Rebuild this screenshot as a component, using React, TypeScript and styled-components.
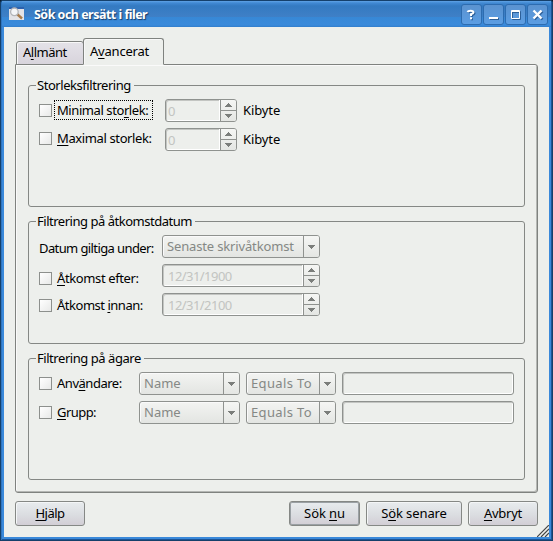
import React from "react";
import styled, { createGlobalStyle } from "styled-components";

const Global = createGlobalStyle`
  * { box-sizing: border-box; }
  html, body { margin: 0; padding: 0; overflow: hidden; }
  body { background: #0c1c30; font-family: "Noto Sans", "Open Sans", sans-serif; font-size: 13px; line-height: 18px; color: #000; }
`;

const Frame = styled.div`
  width: 553px;
  height: 541px;
  display: flex;
  flex-direction: column;
  background: #3a89da;
  border: 1px solid #15406b;
  border-radius: 3px 3px 0 0;
  padding: 0 3px 3px;
  box-shadow: inset 1px 0 #2f75bf, inset -1px -1px #1d5496;
`;

const TitleBar = styled.div`
  height: 26px;
  margin: 0 -2px;
  padding: 3px 3px 0 6px;
  display: flex;
  background: linear-gradient(#60a3e6 0, #4189d3 2px, #347ac1 5px, #3f80c7 16px, #3788d6 16px, #3a8adb 24px, #327dcb 26px);
`;

const Title = styled.div<{ $track: number }>`
  flex: 1;
  margin: 2px 0 0 9px;
  font-weight: 700;
  font-size: 12.5px;
  color: #fff;
  letter-spacing: ${(p) => p.$track}px;
  text-shadow: 1px 1px 1px #173c68;
  white-space: pre;
`;

const TitleButtons = styled.div`
  display: flex;
  gap: 1px;
`;

const TitleButton = styled.div`
  width: 21px;
  height: 21px;
  border: 1px solid #2d6cb0;
  border-radius: 3px;
  background: linear-gradient(#5b93d0, #5b9de3);
  svg { display: block; }
`;

const Content = styled.div`
  flex: 1;
  display: flex;
  flex-direction: column;
  background: #edefec;
  padding: 11px 11px 0;
  position: relative;
`;

const Tabs = styled.div`
  display: flex;
  align-items: flex-end;
  height: 27px;
  margin-bottom: -1px;
  position: relative;
`;

const Tab = styled.div<{ $active?: boolean }>`
  width: ${(p) => (p.$active ? 81 : 68)}px;
  height: ${(p) => (p.$active ? 27 : 24)}px;
  margin-left: ${(p) => (p.$active ? -1 : 1)}px;
  padding: ${(p) => (p.$active ? "3px 0 0 6px" : "1px 0 0 6px")};
  border: 1px solid #7f827f;
  border-bottom-color: ${(p) => (p.$active ? "#edefec" : "#7f827f")};
  border-radius: 3px 3px 0 0;
  background: ${(p) => (p.$active ? "#edefec" : "linear-gradient(#e4e2e8, #d8d4dc)")};
  box-shadow: inset 1px 1px #f8f8f8;
  z-index: ${(p) => (p.$active ? 1 : 0)};
`;

const Panel = styled.div`
  width: 523px;
  height: 429px;
  border: 1px solid #7f827f;
  border-radius: 0 3px 3px 3px;
  box-shadow: inset 1px 1px #fafafa, inset -1px -1px #b5b7b4;
  padding: 20px 12px 0;
`;

const Group = styled.div<{ $height: number }>`
  height: ${(p) => p.$height}px;
  width: 497px;
  border: 1px solid #858885;
  border-radius: 3px;
  margin-bottom: 14px;
`;

const Legend = styled.div`
  width: fit-content;
  height: 19px;
  margin: -10px 0 0 7px;
  padding: 0 3px 0 1px;
  background: #edefec;
`;

const Row = styled.div<{ $gap: number }>`
  display: flex;
  align-items: flex-start;
  height: 23px;
  margin-top: ${(p) => p.$gap}px;
  padding-left: 10px;
`;

const CheckCell = styled.div<{ $width: number; $top: number }>`
  width: ${(p) => p.$width}px;
  padding-top: ${(p) => p.$top}px;
  display: flex;
  align-items: flex-start;
  flex: none;
`;

const Box = styled.div`
  width: 13px;
  height: 13px;
  flex: none;
  border: 1px solid #8d908d;
  background: linear-gradient(135deg, #fff, #e8e9e8);
`;

const CheckLabel = styled.div<{ $focus?: boolean }>`
  width: ${(p) => (p.$focus ? "99px" : "auto")};
  height: 20px;
  margin: -4px 0 0 2px;
  padding: 0 0 0 2px;
  border: 1px dotted ${(p) => (p.$focus ? "#000" : "transparent")};
`;

const Text = styled.span<{ $track?: number }>`
  white-space: pre;
  letter-spacing: ${(p) => p.$track ?? 0}px;
  u { text-decoration: underline; text-underline-offset: 2px; text-decoration-thickness: 1px; text-decoration-skip-ink: none; }
`;

const Field = styled.div<{ $width: number; $kind: "combo" | "spin" | "text" }>`
  width: ${(p) => p.$width}px;
  height: 23px;
  flex: none;
  display: flex;
  border: 1px solid #8f928f;
  border-radius: 3px;
  overflow: hidden;
  color: ${(p) => (p.$kind === "combo" ? "#858885" : "#c2c4c1")};
  background: ${(p) => (p.$kind === "combo" ? "linear-gradient(#f3f4f2, #e3e5e2)" : "#edefec")};
  box-shadow: ${(p) => (p.$kind === "combo" ? "inset 1px 1px #fafafa" : "inset 1px 1px #c3c5c2, inset -1px -1px #fff")};
`;

const Value = styled.div<{ $combo?: boolean; $left?: number }>`
  flex: 1;
  padding: ${(p) => (p.$combo ? 1 : 2)}px 0 0 ${(p) => p.$left ?? 4}px;
  border-right: ${(p) => (p.$combo ? "0" : "1px solid #fff")};
`;

const Arrows = styled.div`
  width: 16px;
  border-left: 1px solid #8f928f;
  background: linear-gradient(#f5f6f4, #e4e6e3);
  svg { display: block; }
`;

const Suffix = styled.div`
  margin: 2px 0 0 6px;
`;

const Actions = styled.div`
  display: flex;
  margin-top: 8px;
  width: 523px;
`;

const Button = styled.div<{ $width: number; $left?: number; $default?: boolean }>`
  width: ${(p) => p.$width}px;
  height: 25px;
  margin-left: ${(p) => p.$left ?? 0}px;
  padding-top: 2px;
  text-align: center;
  border: 1px solid #858885;
  border-radius: 3px;
  background: linear-gradient(#e8ecee, #dbdde1 55%, #d2ced5);
  box-shadow: ${(p) => (p.$default ? "inset 0 0 0 1px #9aa0a4" : "inset 1px 1px #f4f6f7")};
`;

const Grip = styled.svg`
  position: absolute;
  right: 0;
  bottom: 0;
`;

function SpinArrows() {
  return (
    <Arrows>
      <svg width="15" height="21" shapeRendering="crispEdges">
        <path d="M0 10.5H15" stroke="#8f928f" />
        <path d="M7 3h1v1h1v1h1v1h1v1H4V6h1V5h1V4h1zM4 14h7v1h-1v1H9v1H8v1H7v-1H6v-1H5v-1H4z" fill="#7b7e7b" />
      </svg>
    </Arrows>
  );
}

function Spin({ width, value, track, left = 2 }: { width: number; value: string; track?: number; left?: number }) {
  return (
    <Field $width={width} $kind="spin">
      <Value $left={left}><Text $track={track}>{value}</Text></Value>
      <SpinArrows />
    </Field>
  );
}

function Combo({ width, value, track }: { width: number; value: string; track?: number }) {
  return (
    <Field $width={width} $kind="combo">
      <Value $combo><Text $track={track}>{value}</Text></Value>
      <Arrows>
        <svg width="15" height="21" shapeRendering="crispEdges">
          <path d="M4 9h7v1h-1v1H9v1H8v1H7v-1H6v-1H5v-1H4z" fill="#7b7e7b" />
        </svg>
      </Arrows>
    </Field>
  );
}

function Check(p: { width: number; top: number; focus?: boolean; track?: number; children: React.ReactNode }) {
  return (
    <CheckCell $width={p.width} $top={p.top}>
      <Box />
      <CheckLabel $focus={p.focus}><Text $track={p.track}>{p.children}</Text></CheckLabel>
    </CheckCell>
  );
}

function TitleGlyph({ d, thick = 2 }: { d: string; thick?: number }) {
  return (
    <TitleButton>
      <svg width="19" height="19" fill="none" strokeWidth={thick}>
        <path d={d} stroke="#2d5f98" transform="translate(1 1)" />
        <path d={d} stroke="#fff" />
      </svg>
    </TitleButton>
  );
}

export default function App() {
  return (
    <>
      <Global />
      <Frame>
        <TitleBar>
          <svg width="17" height="17" viewBox="0 0 17 17">
            <rect x="1" y="3" width="15" height="13" fill="#e3e3e6" />
            <rect x="1" y="3" width="15" height="2" fill="#2c62ae" />
            <path d="M9 10l5 4.5" stroke="#a87d4d" strokeWidth="2.4" />
            <circle cx="6.4" cy="7.8" r="3.8" fill="#f4f6f8" stroke="#b2b4b8" strokeWidth="1.3" />
          </svg>
          <Title $track={-0.52}>Sök och ersätt i filer</Title>
          <TitleButtons>
            <TitleGlyph d="M5.500 7Q6 5.800 8.500 5.800Q11.500 5.800 11.500 7.500Q11.500 8.500 9 9.300V11M8 13.300h2" />
            <TitleGlyph d="M5 13h9" />
            <TitleGlyph d="M5.500 5.500h8v8h-8zM5 6.500h9" thick={1} />
            <TitleGlyph d="M5.500 5.500l8 8M13.500 5.500l-8 8" thick={2.4} />
          </TitleButtons>
        </TitleBar>
        <Content>
          <Tabs>
            <Tab><Text $track={-0.5}>A<u>l</u>lmänt</Text></Tab>
            <Tab $active><Text $track={-0.2}>A<u>v</u>ancerat</Text></Tab>
          </Tabs>
          <Panel>
            <Group $height={122}>
              <Legend><Text $track={-0.45}>Storleksfiltrering</Text></Legend>
              <Row $gap={4}>
                <Check width={126} top={5} focus track={-0.42}>Minimal sto<u>r</u>lek:</Check>
                <Spin width={72} value="0" />
                <Suffix><Text $track={-0.1}>Kibyte</Text></Suffix>
              </Row>
              <Row $gap={6}>
                <Check width={126} top={4} track={-0.38}><u>M</u>aximal storlek:</Check>
                <Spin width={72} value="0" />
                <Suffix><Text $track={-0.1}>Kibyte</Text></Suffix>
              </Row>
            </Group>
            <Group $height={123}>
              <Legend><Text $track={-0.48}>Filtrering på åtkomstdatum</Text></Legend>
              <Row $gap={4}>
                <CheckCell $width={123} $top={4}><Text $track={-0.6}>Datum giltiga under:</Text></CheckCell>
                <Combo width={158} value="Senaste skrivåtkomst" track={-0.15} />
              </Row>
              <Row $gap={6}>
                <Check width={123} top={8} track={-0.38}><u>Å</u>tkomst efter:</Check>
                <Spin width={158} value="12/31/1900" left={5} track={-0.55} />
              </Row>
              <Row $gap={6}>
                <Check width={123} top={6} track={-0.48}>Åtkomst <u>i</u>nnan:</Check>
                <Spin width={158} value="12/31/2100" left={5} track={-0.55} />
              </Row>
            </Group>
            <Group $height={122}>
              <Legend><Text $track={-0.45}>Filtrering på ägare</Text></Legend>
              <Row $gap={4}>
                <Check width={100} top={5} track={-0.48}>Anv<u>ä</u>ndare:</Check>
                <Combo width={101} value="Name" />
                <Suffix />
                <Combo width={90} value="Equals To" track={0.35} />
                <Suffix />
                <Field $width={172} $kind="text" />
              </Row>
              <Row $gap={6}>
                <Check width={100} top={5} track={-0.55}><u>G</u>rupp:</Check>
                <Combo width={101} value="Name" />
                <Suffix />
                <Combo width={90} value="Equals To" track={0.35} />
                <Suffix />
                <Field $width={172} $kind="text" />
              </Row>
            </Group>
          </Panel>
          <Actions>
            <Button $width={70}><Text $track={-0.5}><u>H</u>jälp</Text></Button>
            <Button $width={71} $left={204} $default><Text $track={-0.1}>Sök <u>n</u>u</Text></Button>
            <Button $width={96} $left={6}><Text $track={-0.1}>S<u>ö</u>k senare</Text></Button>
            <Button $width={70} $left={6}><Text $track={-0.25}><u>A</u>vbryt</Text></Button>
          </Actions>
          <Grip width="12" height="12">
            <path d="M0 12L12 0M4 12L12 4M8 12L12 8" stroke="#444" strokeWidth="1.2" />
          </Grip>
        </Content>
      </Frame>
    </>
  );
}
